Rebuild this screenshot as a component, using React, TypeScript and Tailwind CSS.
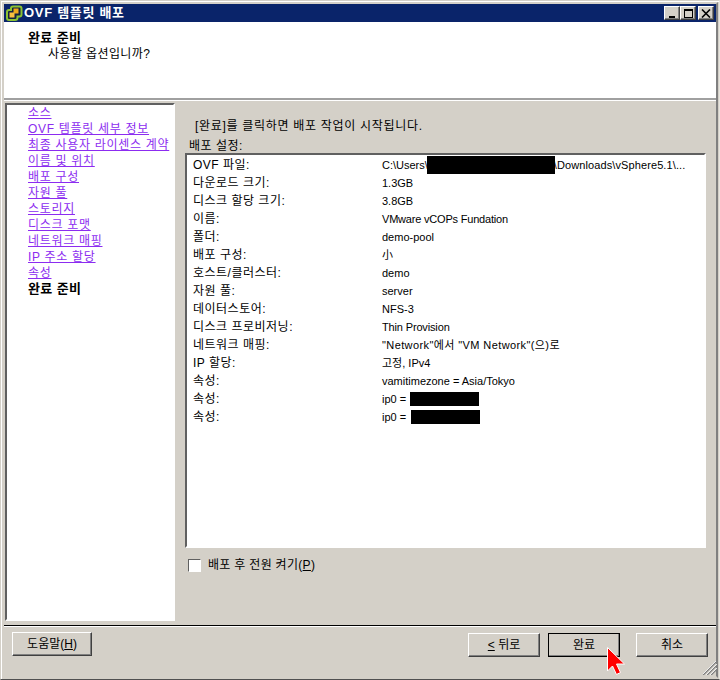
const KR = 'font-["Liberation_Sans","Noto_Sans_CJK_KR",sans-serif]'

const NAV = ['소스', 'OVF 템플릿 세부 정보', '최종 사용자 라이센스 계약', '이름 및 위치', '배포 구성', '자원 풀', '스토리지', '디스크 포맷', '네트워크 매핑', 'IP 주소 할당', '속성']

const ROWS: [string, React.ReactNode][] = [
  ['OVF 파일:', <span className="flex items-center">C:\Users\<span className="-ml-[1px] mr-[-1px] h-[18px] w-[128px] shrink-0 bg-black" /><span className="tracking-[0.1px]">\Downloads\vSphere5.1\...</span></span>],
  ['다운로드 크기:', '1.3GB'],
  ['디스크 할당 크기:', '3.8GB'],
  ['이름:', <span className="tracking-[-0.2px]">VMware vCOPs Fundation</span>],
  ['폴더:', 'demo-pool'],
  ['배포 구성:', '小'],
  ['호스트/클러스터:', 'demo'],
  ['자원 풀:', 'server'],
  ['데이터스토어:', 'NFS-3'],
  ['디스크 프로비저닝:', <span className="tracking-[-0.15px]">Thin Provision</span>],
  ['네트워크 매핑:', <span className="tracking-[0.4px]">"Network"에서 "VM Network"(으)로</span>],
  ['IP 할당:', '고정, IPv4'],
  ['속성:', 'vamitimezone = Asia/Tokyo'],
  ['속성:', <span className="flex items-center">ip0 =<span className="ml-[4px] h-[14px] w-[69px] bg-black" /></span>],
  ['속성:', <span className="flex items-center">ip0 =<span className="ml-[5px] h-[14px] w-[69px] bg-black" /></span>],
]

function Btn({ children, className = '' }: { children: React.ReactNode; className?: string }) {
  return (
    <div className={`flex h-[24px] items-center justify-center border border-t-white border-l-white border-r-[#404040] border-b-[#404040] bg-[#d4d0c8] text-[12px] shadow-[inset_-1px_-1px_0_#808080] ${className}`}>
      {children}
    </div>
  )
}

function CapBtn({ children, className = '' }: { children: React.ReactNode; className?: string }) {
  return (
    <div className={`flex h-[14px] w-[16px] items-center justify-center border border-t-white border-l-white border-r-[#404040] border-b-[#404040] bg-[#d4d0c8] shadow-[inset_-1px_-1px_0_#808080] ${className}`}>
      {children}
    </div>
  )
}

export default function App() {
  return (
    <div className={`relative flex h-[680px] w-[720px] flex-col overflow-hidden border border-t-[#d4d0c8] border-l-[#d4d0c8] border-r-[#e8e6e0] border-b-[#505050] bg-[#d4d0c8] text-black shadow-[inset_1px_1px_0_#fff] ${KR}`}>
      <div className="m-px flex h-full flex-col border-[2px] border-t-[#d4d0c8] border-l-[#d4d0c8] border-r-[#808080] border-b-[#d4d0c8]">
        {/* title bar */}
        <div className="flex h-[18px] shrink-0 items-center bg-[#0a246a] pr-[2px]">
          <svg width="18" height="18" viewBox="0 0 18 18" className="ml-px shrink-0">
            <path d="M8 2.500h6.500a2 2 0 0 1 2 2v6a2 2 0 0 1-2 2h-2v1a2.500 2.500 0 0 1-2.500 2.500H4a2 2 0 0 1-2-2V8a2 2 0 0 1 2-2h2V4.500a2 2 0 0 1 2-2z" fill="#14213f" stroke="#8cc332" strokeWidth="2" />
            <rect x="8.500" y="4.500" width="5" height="5" fill="#f0a818" />
            <rect x="4.500" y="8.500" width="5" height="5" fill="#f8c040" />
          </svg>
          <span className="ml-[1px] text-[13px] font-bold tracking-[0.7px] text-white">OVF 템플릿 배포</span>
          <div className="ml-auto flex">
            <CapBtn><span className="mt-[7px] h-[2px] w-[6px] bg-black" /></CapBtn>
            <CapBtn><span className="h-[9px] w-[9px] border border-t-2 border-black" /></CapBtn>
            <CapBtn className="ml-[2px]">
              <svg width="10" height="9" viewBox="0 0 10 9"><path d="M1 0.500l8 8M9 0.500l-8 8" stroke="#000" strokeWidth="1.600" /></svg>
            </CapBtn>
          </div>
        </div>

        {/* header */}
        <div className="h-[78px] shrink-0 border-b-2 border-b-[#a0a0a0] bg-white pl-[24px] pt-[8px]">
          <div className="text-[13px] font-bold leading-[16px] tracking-[0.4px]">완료 준비</div>
          <div className="pl-[20px] text-[12px] leading-[16px] tracking-[0.4px]">사용할 옵션입니까?</div>
        </div>
        <div className="h-px shrink-0 bg-white" />

        {/* body */}
        <div className="flex min-h-0 flex-1 pl-px pt-[2px]">
          {/* steps */}
          <div className="h-[518px] w-[170px] shrink-0 overflow-hidden border-2 border-t-[#606060] border-l-[#606060] border-r-white border-b-white bg-white pl-[21px] text-[12px] leading-[16px] tracking-[0.7px]">
            {NAV.map(n => (
              <div key={n} className="h-[16px] whitespace-nowrap text-[#8c2cf0] underline">{n}</div>
            ))}
            <div className="h-[16px] whitespace-nowrap text-[13px] font-bold tracking-[0.4px]">완료 준비</div>
          </div>

          {/* details */}
          <div className="flex min-w-0 flex-1 flex-col pl-[10px] pr-[10px]">
            <div className="ml-[10px] mt-[15px] h-[16px] text-[12px] leading-[16px] tracking-[0.7px]">[완료]를 클릭하면 배포 작업이 시작됩니다.</div>
            <div className="ml-[4px] mt-[5px] h-[14px] text-[12px] leading-[14px] tracking-[0.5px]">배포 설정:</div>
            <div className="h-[395px] border-2 border-t-[#606060] border-l-[#606060] border-r-white border-b-white bg-white pl-[6px] pt-px text-[11px]">
              {ROWS.map(([k, v], i) => (
                <div key={i} className="flex h-[18px] items-center whitespace-nowrap">
                  <span className="w-[189px] shrink-0 text-[12px] tracking-[0.5px]">{k}</span>
                  {v}
                </div>
              ))}
            </div>
            <div className="ml-[3px] mt-[8px] flex items-center text-[12px] tracking-[0.3px]">
              <span className="h-[13px] w-[13px] border border-t-[#606060] border-l-[#606060] border-r-white border-b-white bg-white" />
              <span className="ml-[7px]">배포 후 전원 켜기(<span className="underline">P</span>)</span>
            </div>
          </div>
        </div>

        {/* footer */}
        <div className="h-[51px] shrink-0 border-t border-t-black">
          <div className="h-px bg-white" />
          <div className="flex items-start pl-[8px] pr-[8px] pt-[5px]">
            <Btn className="w-[80px]">도움말(<span className="underline">H</span>)</Btn>
            <div className="ml-auto flex pt-px">
              <Btn className="w-[72px]"><span className="underline">&lt;</span>&nbsp;뒤로</Btn>
              <Btn className="ml-[8px] w-[72px] outline outline-1 -outline-offset-1 outline-black">완료</Btn>
              <Btn className="ml-[16px] w-[72px]">취소</Btn>
            </div>
          </div>
        </div>
      </div>

      {/* resize grip */}
      <svg width="14" height="14" viewBox="0 0 14 14" className="absolute bottom-[4px] right-[2px]">
        <path d="M14 0L0 14M14 4L4 14M14 8L8 14" stroke="#808080" strokeWidth="1.500" />
        <path d="M13 0L0 13M14 3L3 14M14 7L7 14" stroke="#fff" strokeWidth="0.800" />
      </svg>

      {/* mouse pointer */}
      <svg width="20" height="30" viewBox="0 0 20 30" className="absolute left-[605px] top-[645px]">
        <path d="M1.500 1.500V25l5-5 4 8.500 4-2-4-8.500h8z" fill="#ff0000" stroke="#fff" strokeWidth="1" />
      </svg>
    </div>
  )
}
